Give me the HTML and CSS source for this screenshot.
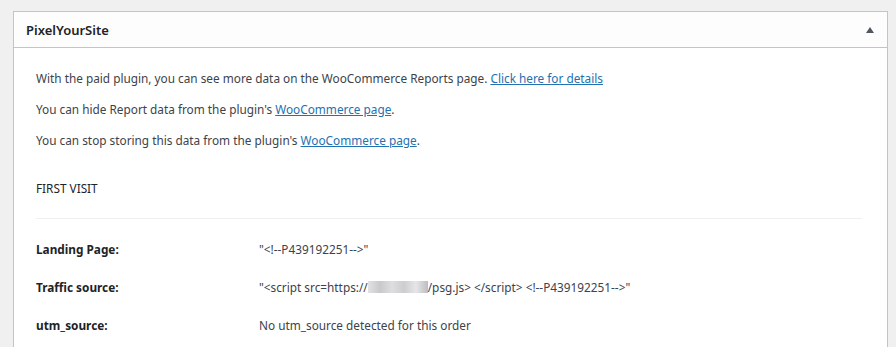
FILE: index.html
```html
<!DOCTYPE html>
<html lang="en">
<head>
    <meta charset="UTF-8">
    <meta name="viewport" content="width=device-width, initial-scale=1.0">
    <title>PixelYourSite</title>
    <link rel="stylesheet" href="styles.css">
</head>
<body>
    <div class="postbox">
        <div class="postbox-header">
            <h2>PixelYourSite</h2>
            <span class="toggle"></span>
        </div>
        <div class="inside">
            <p>With the paid plugin, you can see more data on the WooCommerce Reports page. <a href="#">Click here for details</a></p>
            <p>You can hide Report data from the plugin's <a href="#">WooCommerce page</a>.</p>
            <p>You can stop storing this data from the plugin's <a href="#">WooCommerce page</a>.</p>

            <h3 class="titulo">FIRST VISIT</h3>
            <hr class="linha">

            <table class="dados">
                <tr>
                    <th>Landing Page:</th>
                    <td>"&lt;!--P439192251--&gt;"</td>
                </tr>
                <tr>
                    <th>Traffic source:</th>
                    <td>"&lt;script src=https://<span class="borrado"></span>/psg.js&gt; &lt;/script&gt; &lt;!--P439192251--&gt;"</td>
                </tr>
                <tr>
                    <th>utm_source:</th>
                    <td>No utm_source detected for this order</td>
                </tr>
            </table>
        </div>
    </div>
</body>
</html>
```

FILE: styles.css
```css
*{
    margin: 0;
    padding: 0;
    box-sizing: border-box;
}
html, body{
    height: 100%;
    overflow: hidden;
}
body{
    background-color: #f0f0f1;
    padding: 11px 8px 0 13px;
    font-family: "Noto Sans", "Open Sans", sans-serif;
    font-size: 11.8px;
    color: #3c434a;
}
.postbox{
    background-color: #fff;
    border: 1px solid #c3c4c7;
    border-bottom: 0;
    height: 100%;
}
.postbox-header{
    height: 36px;
    border-bottom: 1px solid #c3c4c7;
    display: flex;
    align-items: center;
    justify-content: space-between;
    padding: 0 12px;
    background-color: #fdfdfd;
}
.postbox-header h2{
    font-size: 13px;
    font-weight: 600;
    color: #1d2327;
}
.toggle{
    width: 0;
    height: 0;
    border-left: 4px solid transparent;
    border-right: 4px solid transparent;
    border-bottom: 6px solid #50575e;
    margin-right: 1px;
}
.inside{
    padding: 8px 22px 0 22px;
}
.inside p{
    line-height: 18px;
    margin: 13px 0;
}
a{
    color: #2271b1;
}
.titulo{
    font-size: 11.8px;
    font-weight: 400;
    color: #1d2327;
    line-height: 18px;
    margin-top: 30px;
}
.linha{
    border: 0;
    border-top: 1px solid #f0f0f1;
    margin: 21px 0 0 0;
    width: 826px;
}
.dados{
    border-collapse: collapse;
    margin-top: 11px;
}
.dados th{
    text-align: left;
    font-weight: 700;
    color: #1d2327;
    width: 223px;
    height: 38px;
}
.dados td{
    height: 38px;
}
.borrado{
    display: inline-block;
    width: 60px;
    height: 12px;
    vertical-align: -1px;
    background-image: linear-gradient(to right, #e2e2e4, #c9c9cc, #dedee0, #cdcdd0, #e6e6e8, #bdbdc0);
}
```
